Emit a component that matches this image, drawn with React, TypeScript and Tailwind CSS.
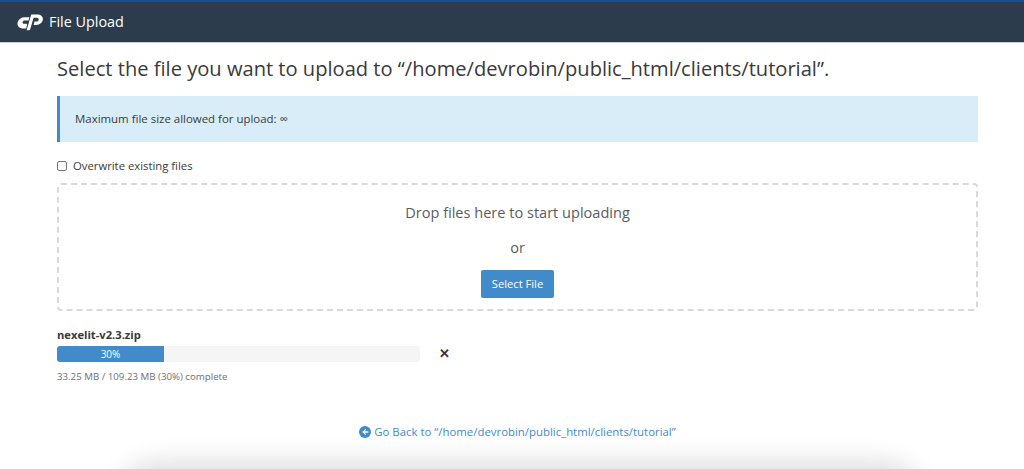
import React from "react";

function CpLogo() {
  return (
    <svg width="26" height="18" viewBox="0 0 26 18" fill="#ffffff" className="shrink-0">
      <path d="M7.6 4.2H12.4L11.5 7.6H7.8C6.7 7.6 6 8.1 5.7 9C5.4 10 6 10.8 7.1 10.8H9C9.8 10.8 10.3 11.5 10.1 12.2L9.2 15.4H6.4C2.3 15.4 -0.3 12.6 0.7 9.2C1.5 6.2 4.2 4.2 7.6 4.2Z" />
      <path d="M14.2 1.4H20.3C24.2 1.4 26.6 4 25.7 7.3C25 10.1 22.5 11.9 19.5 11.9H16.6L17.5 8.6H19.4C20.5 8.6 21.3 8.1 21.6 7.1C21.9 5.9 21.2 4.8 19.9 4.8H16.6L13.2 16.2C13 16.8 12.5 17.2 11.8 17.2H9.6L14.2 1.4Z" />
    </svg>
  );
}

function BackIcon() {
  return (
    <svg width="12" height="12" viewBox="0 0 12 12" className="shrink-0">
      <circle cx="6" cy="6" r="6" fill="#428bca" />
      <path d="M6.4 2.9L3.3 6L6.4 9.1L7.2 8.3L5.6 6.7H9.4V5.3H5.6L7.2 3.7Z" fill="#ffffff" />
    </svg>
  );
}

export default function App() {
  return (
    <div className="relative h-[469px] w-[1024px] overflow-hidden bg-white font-['Open_Sans',sans-serif] text-[#3a3a3a]">
      <header className="flex h-[43px] items-center gap-[6px] border-t-2 border-b border-t-[#174f96] border-b-[#c9ced3] bg-[#2c3c4d] pl-[17px] text-white">
        <CpLogo />
        <span className="text-[14.4px] leading-none">File Upload</span>
      </header>

      <main className="flex flex-col px-[57px] pr-[46px]">
        <h1 className="mt-[13px] text-[20.13px] leading-[24px] font-normal whitespace-nowrap">
          Select the file you want to upload to “/home/devrobin/public_html/clients/tutorial”.
        </h1>

        <div className="mt-[16px] flex h-[46px] items-center border-l-[3px] border-l-[#428bca] bg-[#d9edf9] pl-[15px] text-[11.45px]">
          Maximum file size allowed for upload: ∞
        </div>

        <label className="mt-[16px] flex h-[16px] items-center gap-[6px] text-[11.3px]">
          <input type="checkbox" className="h-[10px] w-[10px] appearance-none rounded-[2px] border border-[#767676] bg-white" />
          Overwrite existing files
        </label>

        <section className="mt-[9px] flex h-[128px] flex-col items-center rounded-[4px] border-2 border-dashed border-[#d9d9d9] text-[#5c5c5c]">
          <p className="mt-[17px] text-[14.55px] leading-[20px]">Drop files here to start uploading</p>
          <p className="mt-[15px] text-[14.55px] leading-[20px]">or</p>
          <button className="mt-[13px] h-[28px] w-[73px] rounded-[2px] bg-[#428bca] text-[11.2px] text-white">Select File</button>
        </section>

        <p className="mt-[16px] text-[11.2px] leading-[16px] font-bold">nexelit-v2.3.zip</p>

        <div className="mt-[3px] flex items-center">
          <div className="flex h-[16px] w-[363px] overflow-hidden rounded-[3px] bg-[#f5f5f5]">
            <div className="flex w-[107px] items-center justify-center bg-[#428bca] text-[10px] text-white">30%</div>
          </div>
          <span className="relative bottom-[1px] ml-[19px] text-[13px] leading-none font-bold text-[#333333]">✕</span>
        </div>

        <p className="mt-[8px] text-[9.7px] leading-[14px] text-[#707070]">33.25 MB / 109.23 MB (30%) complete</p>

        <a className="mt-[40px] flex items-center justify-center gap-[3px] text-[11.4px] leading-[16px] text-[#428bca]">
          <BackIcon />
          Go Back to “/home/devrobin/public_html/clients/tutorial”
        </a>
      </main>

      <div className="absolute top-[468px] left-[120px] h-[40px] w-[800px] rounded-t-[40px] bg-[#e8e8e8] shadow-[0_0_24px_8px_rgba(0,0,0,0.12)]" />
    </div>
  );
}
